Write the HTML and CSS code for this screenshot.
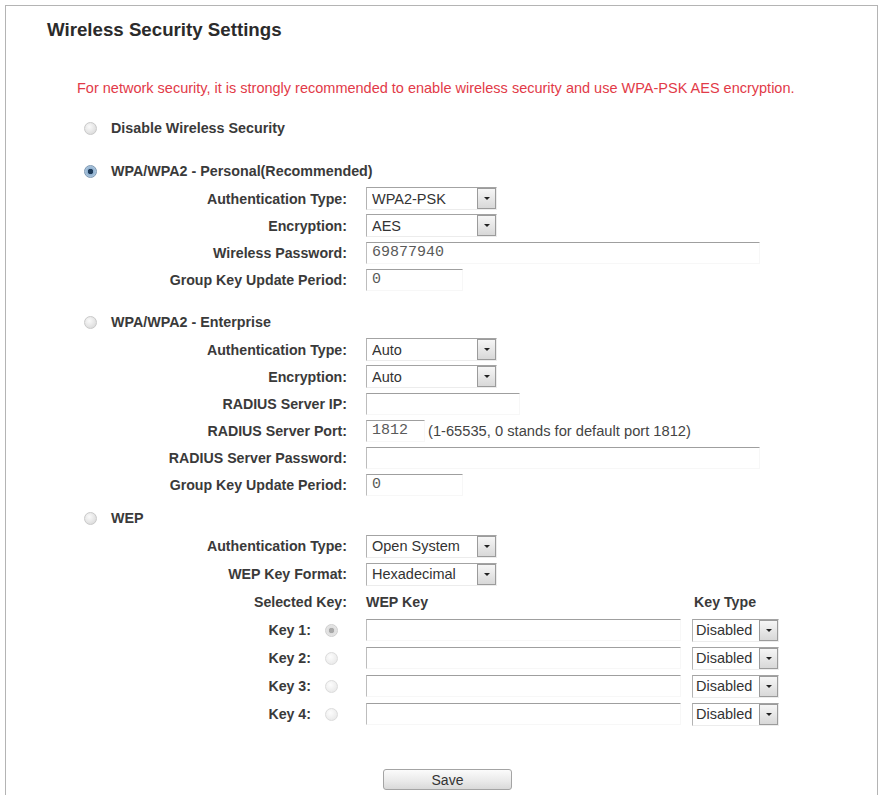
FILE: index.html
```html
<!DOCTYPE html>
<html lang="en">
<head>
  <meta charset="UTF-8">
  <meta name="viewport" content="width=device-width, initial-scale=1.0">
  <title>Wireless Security Settings</title>
  <link rel="stylesheet" href="styles.css">
</head>
<body>
  <div class="panel">
    <h1 class="title">Wireless Security Settings</h1>

    <p class="notice">For network security, it is strongly recommended to enable wireless security and use WPA-PSK AES encryption.</p>

    <form class="security-form">
      <!-- no security -->
      <div class="section section-first">
        <label class="option"><input type="radio" name="secType" value="0"> Disable Wireless Security</label>
      </div>

      <!-- WPA/WPA2 personal -->
      <div class="section">
        <label class="option"><input type="radio" name="secType" value="3" checked> WPA/WPA2 - Personal(Recommended)</label>
        <div class="row">
          <span class="label">Authentication Type:</span>
          <span class="select"><select><option>WPA2-PSK</option></select><span class="select-btn"></span></span>
        </div>
        <div class="row">
          <span class="label">Encryption:</span>
          <span class="select"><select><option>AES</option></select><span class="select-btn"></span></span>
        </div>
        <div class="row">
          <span class="label">Wireless Password:</span>
          <input class="text text-long" type="text" value="69877940">
        </div>
        <div class="row">
          <span class="label">Group Key Update Period:</span>
          <input class="text text-short" type="text" value="0">
        </div>
      </div>

      <!-- WPA/WPA2 enterprise -->
      <div class="section">
        <label class="option"><input type="radio" name="secType" value="2"> WPA/WPA2 - Enterprise</label>
        <div class="row">
          <span class="label">Authentication Type:</span>
          <span class="select"><select><option>Auto</option></select><span class="select-btn"></span></span>
        </div>
        <div class="row">
          <span class="label">Encryption:</span>
          <span class="select"><select><option>Auto</option></select><span class="select-btn"></span></span>
        </div>
        <div class="row">
          <span class="label">RADIUS Server IP:</span>
          <input class="text text-ip" type="text" value="">
        </div>
        <div class="row">
          <span class="label">RADIUS Server Port:</span>
          <input class="text text-port" type="text" value="1812">
          <span class="hint">(1-65535, 0 stands for default port 1812)</span>
        </div>
        <div class="row">
          <span class="label">RADIUS Server Password:</span>
          <input class="text text-long" type="text" value="">
        </div>
        <div class="row">
          <span class="label">Group Key Update Period:</span>
          <input class="text text-short" type="text" value="0">
        </div>
      </div>

      <!-- WEP -->
      <div class="section section-wep">
        <label class="option"><input type="radio" name="secType" value="1"> WEP</label>
        <div class="row row-wep">
          <span class="label">Authentication Type:</span>
          <span class="select"><select><option>Open System</option></select><span class="select-btn"></span></span>
        </div>
        <div class="row row-wep">
          <span class="label">WEP Key Format:</span>
          <span class="select"><select><option>Hexadecimal</option></select><span class="select-btn"></span></span>
        </div>
        <div class="row row-wep">
          <span class="label">Selected Key:</span>
          <span class="col-head col-key">WEP Key</span>
          <span class="col-head">Key Type</span>
        </div>
        <div class="row row-wep">
          <span class="label">Key 1: <input class="key-radio" type="radio" name="keynum" checked disabled></span>
          <input class="text text-key" type="text" value="">
          <span class="select select-small"><select><option>Disabled</option></select><span class="select-btn"></span></span>
        </div>
        <div class="row row-wep">
          <span class="label">Key 2: <input class="key-radio" type="radio" name="keynum" disabled></span>
          <input class="text text-key" type="text" value="">
          <span class="select select-small"><select><option>Disabled</option></select><span class="select-btn"></span></span>
        </div>
        <div class="row row-wep">
          <span class="label">Key 3: <input class="key-radio" type="radio" name="keynum" disabled></span>
          <input class="text text-key" type="text" value="">
          <span class="select select-small"><select><option>Disabled</option></select><span class="select-btn"></span></span>
        </div>
        <div class="row row-wep">
          <span class="label">Key 4: <input class="key-radio" type="radio" name="keynum" disabled></span>
          <input class="text text-key" type="text" value="">
          <span class="select select-small"><select><option>Disabled</option></select><span class="select-btn"></span></span>
        </div>
      </div>

      <div class="actions">
        <button type="button" class="btn-save">Save</button>
      </div>
    </form>
  </div>
</body>
</html>
```

FILE: styles.css
```css
body {
  margin: 0;
  background-color: #fff;
  font-family: 'Liberation Sans', Arial, sans-serif;
  color: #3a3a3a;
}
.panel {
  margin: 5px 3px 0 5px;
  border: 1px solid #b4b4b4;
  border-bottom: none;
  padding-top: 13px;
  min-height: 790px;
  box-sizing: border-box;
}
.title {
  margin: 0;
  padding-left: 41px;
  font-size: 18.7px;
  line-height: 22px;
  font-weight: bold;
  color: #2b2b2b;
}
.notice {
  margin: 38px 0 0;
  padding-left: 71px;
  font-size: 14.5px;
  line-height: 18px;
  color: #e23a48;
}
.security-form {
  margin-top: 3px;
}
.section {
  margin-top: 15px;
}
.section-first {
  margin-top: 17px;
}
.section-wep {
  margin-top: 6px;
}
.option {
  display: flex;
  align-items: center;
  height: 28px;
  padding-left: 78px;
  font-size: 14.3px;
  font-weight: bold;
  color: #3a3a3a;
}
.option input {
  margin: 0 14px 0 0;
}
input[type=radio] {
  appearance: none;
  -webkit-appearance: none;
  width: 13px;
  height: 13px;
  border: 1px solid #c9c9c9;
  border-radius: 50%;
  background: radial-gradient(circle at 40% 35%, #fafafa, #d4d4d4);
  box-sizing: border-box;
  flex: none;
}
input[type=radio]:checked {
  border-color: #7d98b3;
  background: radial-gradient(circle, #1f3b5a 0 2.5px, #8fb0cf 3px, #c9dbeb 100%);
}
input[type=radio]:disabled {
  border-color: #dcdcdc;
  background: radial-gradient(circle at 40% 35%, #fdfdfd, #e4e4e4);
}
input[type=radio]:checked:disabled {
  border-color: #cfcfcf;
  background: radial-gradient(circle, #a9a9a9 0 2.5px, #dedede 3px, #ececec 100%);
}
.row {
  display: flex;
  align-items: center;
  height: 27px;
}
.row-wep {
  height: 28px;
}
.label {
  display: flex;
  align-items: center;
  justify-content: flex-end;
  width: 360px;
  padding-right: 19px;
  box-sizing: border-box;
  font-size: 14.2px;
  font-weight: bold;
  color: #3a3a3a;
  flex: none;
}
.key-radio {
  margin: 0 9px 0 14px;
}
.select {
  display: inline-flex;
  width: 131px;
  height: 23px;
  border: 1px solid;
  border-color: #a3a3a3 #ececec #ececec #b3b3b3;
  box-sizing: border-box;
  background: #fff;
}
.select select {
  appearance: none;
  -webkit-appearance: none;
  flex: 1;
  min-width: 0;
  border: 0;
  padding: 0 0 0 5px;
  background: transparent;
  font-family: 'Liberation Sans', Arial, sans-serif;
  font-size: 14.5px;
  color: #333;
}
.select-btn {
  position: relative;
  width: 19px;
  border: 1px solid #9b9b9b;
  background: linear-gradient(#f6f6f6, #d8d8d8);
  box-sizing: border-box;
  flex: none;
}
.select-btn::after {
  content: '';
  position: absolute;
  left: 6px;
  top: 8px;
  border-left: 3px solid transparent;
  border-right: 3px solid transparent;
  border-top: 3px solid #222;
}
.select-small {
  width: 87px;
  margin-left: 11px;
}
.select-small select {
  padding-left: 3px;
}
.text {
  height: 22px;
  border: 1px solid;
  border-color: #9f9f9f #f7f7f7 #f7f7f7 #bdbdbd;
  padding: 0 5px;
  box-sizing: border-box;
  font-family: 'Liberation Mono', 'Courier New', monospace;
  font-size: 15px;
  color: #5a5a5a;
  background: #fff;
}
.text-long {
  width: 394px;
}
.text-short {
  width: 97px;
}
.text-ip {
  width: 154px;
}
.text-port {
  width: 59px;
}
.text-key {
  width: 315px;
}
.hint {
  margin-left: 3px;
  font-size: 14.7px;
  color: #444;
}
.col-head {
  font-size: 14.2px;
  font-weight: bold;
  color: #3a3a3a;
}
.col-key {
  width: 328px;
}
.actions {
  display: flex;
  margin-top: 41px;
  padding-left: 377px;
}
.btn-save {
  width: 129px;
  height: 21px;
  border: 1px solid #a4a4a4;
  border-radius: 3px;
  background: linear-gradient(#fbfbfb, #e9e9e9 60%, #d9d9d9);
  font-family: 'Liberation Sans', Arial, sans-serif;
  font-size: 14px;
  color: #333;
  cursor: pointer;
}
```
